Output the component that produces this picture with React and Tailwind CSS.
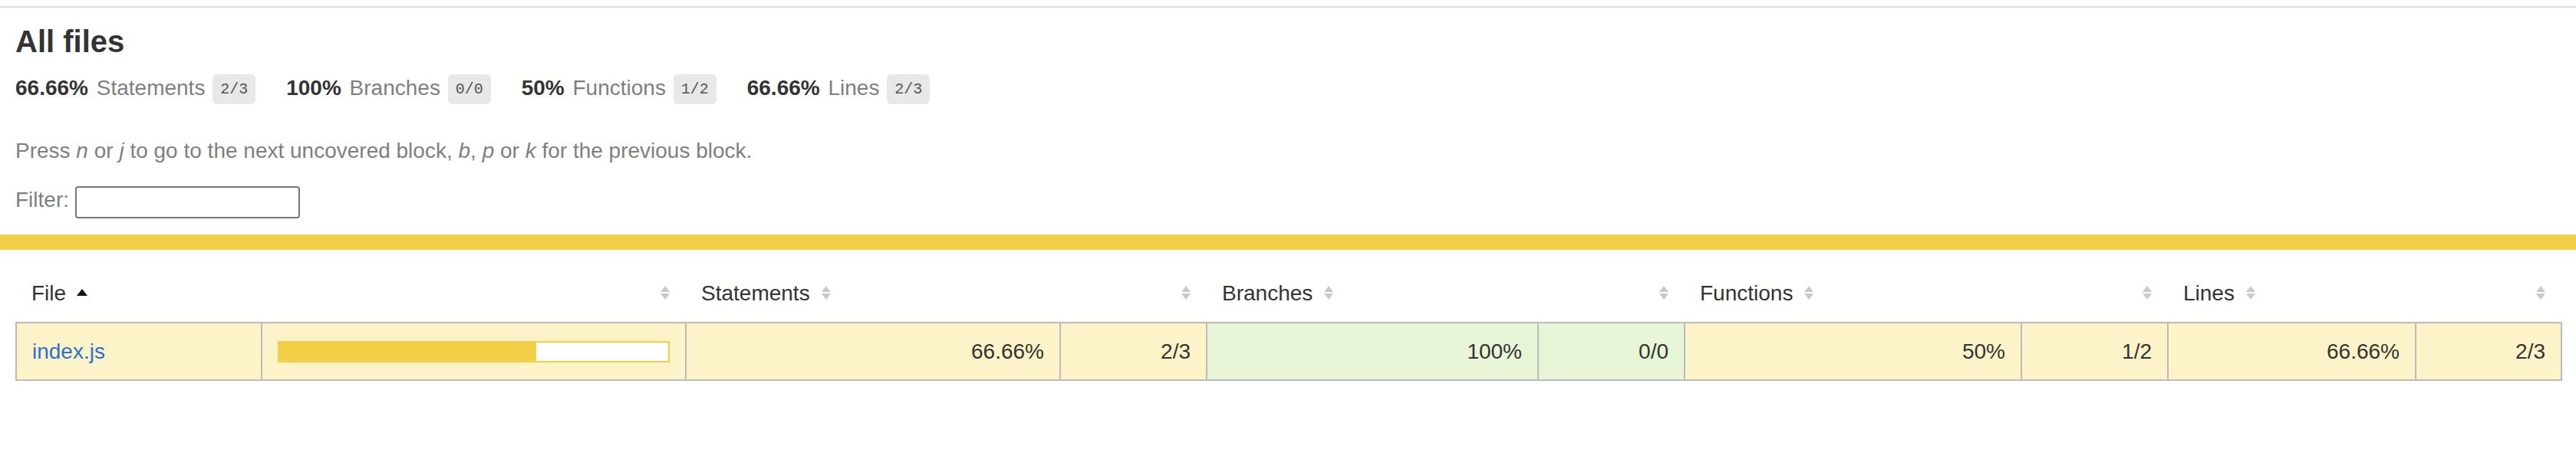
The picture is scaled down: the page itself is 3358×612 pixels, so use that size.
import React from "react";

const YELLOW = "bg-[#f1cf47]";

function Sorter({ sorted }) {
  if (sorted) {
    return (
      <svg className="inline-block align-baseline ml-[14px]" width="14" height="20" viewBox="0 0 14 20">
        <polygon points="0,14 7,5 14,14" fill="#111" />
      </svg>
    );
  }
  return (
    <svg className="inline-block align-baseline ml-[14px]" width="14" height="20" viewBox="0 0 14 20">
      <polygon points="1,9 7,1 13,9" fill="#c9c9c9" />
      <polygon points="1,11 7,19 13,11" fill="#c9c9c9" />
    </svg>
  );
}

function Stat({ pct, label, frac }) {
  return (
    <div className="py-[20px] pr-[40px] leading-[1.2]">
      <span className="font-bold text-[#333]">{pct} </span>{" "}
      <span className="text-[#7f7f7f] ml-[3px] mr-[2px]">{label}</span>{" "}
      <span className="align-middle bg-[#e8e8e8] text-[#555] rounded-[6px] px-[10px] py-[8px] text-[20px] leading-[normal] font-['Liberation_Mono',monospace]">
        {frac}
      </span>
    </div>
  );
}

export default function App() {
  const th = "p-[20px] text-left font-normal whitespace-nowrap leading-[1.2]";
  const thr = "p-[20px] text-right font-normal whitespace-nowrap leading-[1.2]";
  const td = "p-[20px] border-r-2 border-[#bbb] leading-[1.2] text-right";
  return (
    <div className="bg-white text-[#333] text-[28px] leading-[1.2] font-['Liberation_Sans','Helvetica_Neue',Helvetica,Arial,sans-serif] min-h-[612px]">
      <div className="pt-[8px]">
        <div className="h-[2px] bg-[#e0e0e0]" />
      </div>
      <div className="px-[20px] pt-[20px] pb-[21px]">
        <h1 className="text-[40px] font-bold leading-[1.2] m-0">All files</h1>
        <div className="flex flex-wrap">
          <Stat pct="66.66%" label="Statements" frac="2/3" />
          <Stat pct="100%" label="Branches" frac="0/0" />
          <Stat pct="50%" label="Functions" frac="1/2" />
          <Stat pct="66.66%" label="Lines" frac="2/3" />
        </div>
        <p className="text-[#7f7f7f] my-[28px] leading-[1.2]">
          Press <em>n</em> or <em>j</em> to go to the next uncovered block, <em>b</em>, <em>p</em> or <em>k</em> for the previous block.
        </p>
        <div className="flex items-start text-[#7f7f7f] leading-[1.2] pt-[2px]">
          <span className="mt-[1px]">Filter:</span>
          <input
            type="search"
            className="ml-[8px] w-[293px] h-[42px] border-2 border-[#767676] rounded-[4px] bg-white"
          />
        </div>
      </div>
      <div className={`h-[20px] ${YELLOW}`} />
      <div className="p-[20px]">
        <table className="w-full table-fixed border-collapse">
          <colgroup>
            <col className="w-[320px]" />
            <col className="w-[553px]" />
            <col className="w-[488px]" />
            <col className="w-[191px]" />
            <col className="w-[432px]" />
            <col className="w-[191px]" />
            <col className="w-[439px]" />
            <col className="w-[191px]" />
            <col className="w-[323px]" />
            <col className="w-[190px]" />
          </colgroup>
          <thead>
            <tr className="border-b-2 border-[#bbb]">
              <th className={th}>File<Sorter sorted /></th>
              <th className={thr}><Sorter /></th>
              <th className={th}>Statements<Sorter /></th>
              <th className={thr}><Sorter /></th>
              <th className={th}>Branches<Sorter /></th>
              <th className={thr}><Sorter /></th>
              <th className={th}>Functions<Sorter /></th>
              <th className={thr}><Sorter /></th>
              <th className={th}>Lines<Sorter /></th>
              <th className={thr}><Sorter /></th>
            </tr>
          </thead>
          <tbody className="border-2 border-[#bbb]">
            <tr className="border-b-2 border-[#bbb]">
              <td className="p-[20px] border-r-2 border-[#bbb] leading-[1.2] text-left bg-[#fcf4c8] whitespace-nowrap">
                <a href="#" className="text-[#2d6fd4] no-underline">index.js</a>
              </td>
              <td className="p-[20px] border-r-2 border-[#bbb] bg-[#fcf4c8]">
                <div className="flex h-[28px] border-2 border-[#f1cf47]">
                  <div className={`w-[66%] ${YELLOW}`} />
                  <div className="w-[34%] bg-white" />
                </div>
              </td>
              <td className={`${td} bg-[#fcf4c8]`}>66.66%</td>
              <td className={`${td} bg-[#fcf4c8]`}>2/3</td>
              <td className={`${td} bg-[#e8f5d6]`}>100%</td>
              <td className={`${td} bg-[#e8f5d6]`}>0/0</td>
              <td className={`${td} bg-[#fcf4c8]`}>50%</td>
              <td className={`${td} bg-[#fcf4c8]`}>1/2</td>
              <td className={`${td} bg-[#fcf4c8]`}>66.66%</td>
              <td className="p-[20px] leading-[1.2] text-right bg-[#fcf4c8]">2/3</td>
            </tr>
          </tbody>
        </table>
      </div>
    </div>
  );
}
